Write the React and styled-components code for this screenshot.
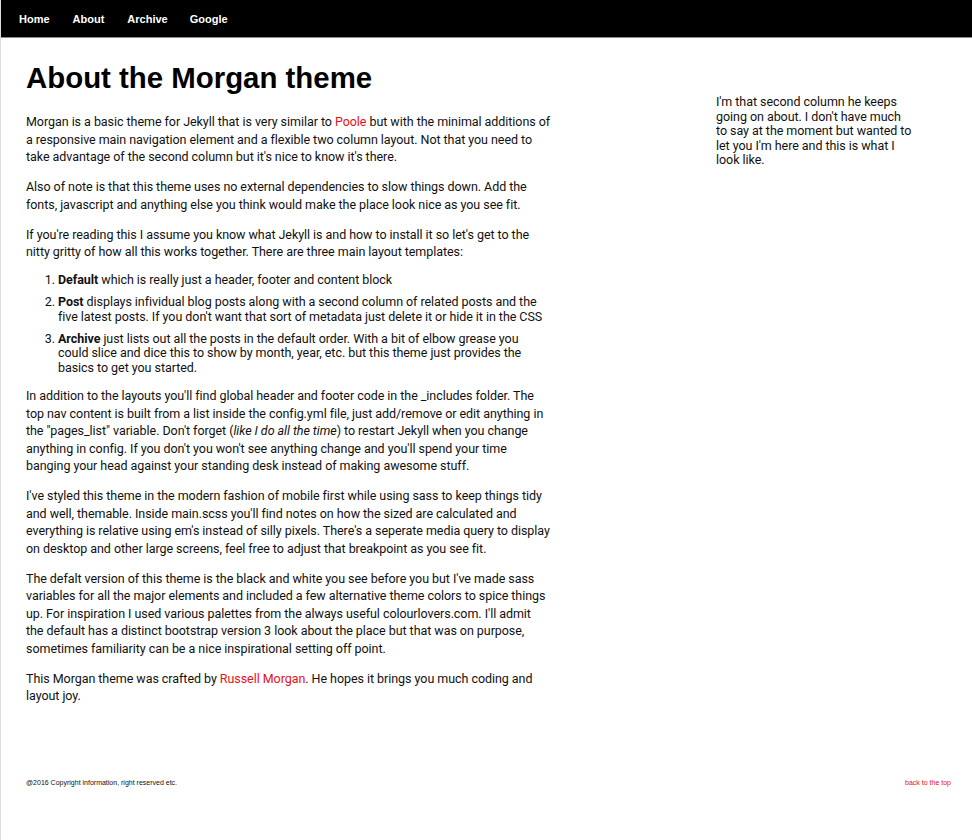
import React from "react";
import styled, { createGlobalStyle } from "styled-components";

const Global = createGlobalStyle`
  html, body { margin: 0; padding: 0; background: #fff; }
  body {
    font-family: Roboto, "Liberation Sans", sans-serif;
    color: #111;
    border-left: 1px solid #dcdcdc;
    min-height: 840px;
    box-sizing: border-box;
  }
`;

const Page = styled.div`
  min-height: 840px;
  display: flex;
  flex-direction: column;
`;

const NavBar = styled.nav`
  background: #000;
  height: 37px;
  border-bottom: 1px solid #8a8a8a;
  display: flex;
  align-items: center;
  padding-left: 18px;
`;

const NavLink = styled.a`
  font-family: "Liberation Sans", Arial, sans-serif;
  font-weight: bold;
  font-size: 11px;
  color: #fff;
  text-decoration: none;
  margin-right: ${(p) => p.$gap}px;
`;

const Layout = styled.div`
  display: grid;
  grid-template-columns: 525px 198px;
  column-gap: 165px;
  padding: 0 26px 0 25px;
  flex: 1;
`;

const Main = styled.main`
  font-size: 12.5px;
  letter-spacing: -0.05px;
`;

const Title = styled.h1`
  font-family: "Liberation Sans", Arial, sans-serif;
  font-weight: bold;
  font-size: 29.4px;
  letter-spacing: 0;
  margin: 23px 0 18px;
  line-height: 34px;
  color: #000;
`;

const P = styled.p`
  line-height: 17.5px;
  margin: 0 0 12.5px;
`;

const Red = styled.a`
  color: #e8101a;
  text-decoration: none;
`;

const List = styled.ol`
  margin: 0 0 12px;
  padding-left: 32px;
`;

const Item = styled.li`
  line-height: 14.5px;
  margin-bottom: 7.5px;
`;

const Side = styled.aside`
  padding-top: 57px;
  font-size: 12.5px;
  letter-spacing: -0.05px;
  line-height: 14.5px;
`;

const Footer = styled.footer`
  display: flex;
  justify-content: space-between;
  padding: 0 21px 53px 25px;
  font-family: "Liberation Sans", Arial, sans-serif;
  font-size: 7px;
  line-height: 9px;
`;

const Copy = styled.span`
  color: #111;
`;

const Top = styled.a`
  color: #e8101a;
  text-decoration: none;
`;

export default function App() {
  return (
    <Page>
      <Global />
      <NavBar>
        <NavLink $gap={23} href="#">Home</NavLink>
        <NavLink $gap={23} href="#">About</NavLink>
        <NavLink $gap={22} href="#">Archive</NavLink>
        <NavLink $gap={0} href="#">Google</NavLink>
      </NavBar>
      <Layout>
        <Main>
          <Title>About the Morgan theme</Title>
          <P>
            Morgan is a basic theme for Jekyll that is very similar to <Red href="#">Poole</Red> but with the minimal additions of a responsive main navigation element and a flexible two column layout. Not that you need to take advantage of the second column but it's nice to know it's there.
          </P>
          <P>
            Also of note is that this theme uses no external dependencies to slow things down. Add the fonts, javascript and anything else you think would make the place look nice as you see fit.
          </P>
          <P>
            If you're reading this I assume you know what Jekyll is and how to install it so let's get to the nitty gritty of how all this works together. There are three main layout templates:
          </P>
          <List>
            <Item><b>Default</b> which is really just a header, footer and content block</Item>
            <Item><b>Post</b> displays infividual blog posts along with a second column of related posts and the five latest posts. If you don't want that sort of metadata just delete it or hide it in the CSS</Item>
            <Item><b>Archive</b> just lists out all the posts in the default order. With a bit of elbow grease you could slice and dice this to show by month, year, etc. but this theme just provides the basics to get you started.</Item>
          </List>
          <P>
            In addition to the layouts you'll find global header and footer code in the _includes folder. The top nav content is built from a list inside the config.yml file, just add/remove or edit anything in the "pages_list" variable. Don't forget (<i>like I do all the time</i>) to restart Jekyll when you change anything in config. If you don't you won't see anything change and you'll spend your time banging your head against your standing desk instead of making awesome stuff.
          </P>
          <P>
            I've styled this theme in the modern fashion of mobile first while using sass to keep things tidy and well, themable. Inside main.scss you'll find notes on how the sized are calculated and everything is relative using em's instead of silly pixels. There's a seperate media query to display on desktop and other large screens, feel free to adjust that breakpoint as you see fit.
          </P>
          <P>
            The defalt version of this theme is the black and white you see before you but I've made sass variables for all the major elements and included a few alternative theme colors to spice things up. For inspiration I used various palettes from the always useful colourlovers.com. I'll admit the default has a distinct bootstrap version 3 look about the place but that was on purpose, sometimes familiarity can be a nice inspirational setting off point.
          </P>
          <P>
            This Morgan theme was crafted by <Red href="#">Russell Morgan</Red>. He hopes it brings you much coding and layout joy.
          </P>
        </Main>
        <Side>
          I'm that second column he keeps going on about. I don't have much to say at the moment but wanted to let you I'm here and this is what I look like.
        </Side>
      </Layout>
      <Footer>
        <Copy>@2016 Copyright information, right reserved etc.</Copy>
        <Top href="#">back to the top</Top>
      </Footer>
    </Page>
  );
}
